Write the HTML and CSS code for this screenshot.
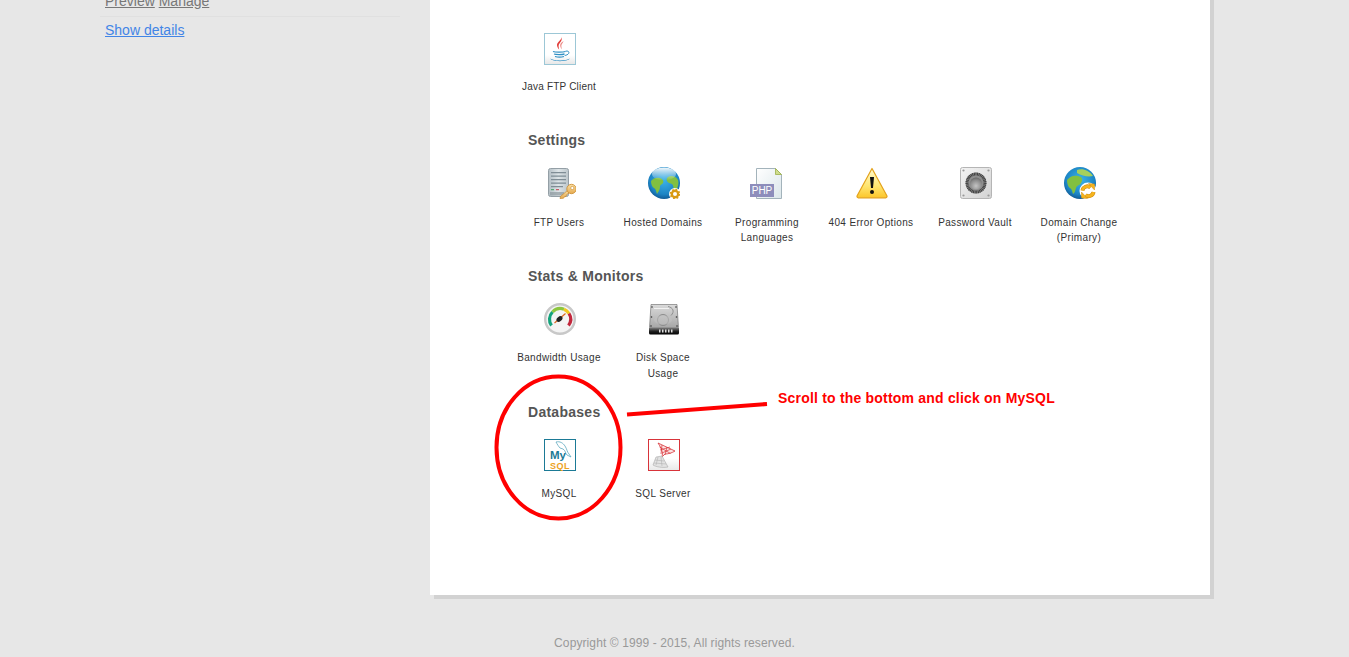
FILE: index.html
```html
<!DOCTYPE html>
<html lang="en">
<head>
<meta charset="utf-8">
<title>Control Panel</title>
<link rel="stylesheet" href="styles.css">
</head>
<body>
<div class="page">
  <aside class="sidebar">
    <div class="site-links"><a class="muted" href="#">Preview</a> <a class="muted" href="#">Manage</a></div>
    <div class="details"><a class="blue" href="#">Show details</a></div>
  </aside>
  <main class="panel">
    <section class="group first">
      <div class="tiles">
        <div class="tile">
          <svg class="icon" viewBox="0 0 32 32"><defs><linearGradient id="gj" x1="0" y1="0" x2="0" y2="1"><stop offset="0.7" stop-color="#fff"/><stop offset="1" stop-color="#e6e6e6"/></linearGradient></defs><rect x=".5" y=".5" width="31" height="31" fill="url(#gj)" stroke="#9cc7d6"/><path d="M17.500 3.500c1 3-4 5-4.500 8-.3 1.800 1 3.800 2.200 5.300-.2-2-1-3.200-.4-5 .8-2.300 4-4 2.700-8.300z" fill="#e2403c"/><path d="M19.500 8c-2.500 1.500-3.500 3-3.300 4.700.1 1.200 1 2.300 1 3.800 1-1.700-.2-2.900.2-4.200.4-1.300 1.700-2.500 2.100-4.300z" fill="#ec8a86"/><path d="M9 18.500c2 .9 10 .9 12.500 0M10 21c2 .7 8 .7 10.500 0M11 23.500c2 .6 7 .6 9 0" fill="none" stroke="#2f8fc4" stroke-width="1.300"/><path d="M21.500 18.200c2.500-.7 4 .6 3.200 2.200-.7 1.200-2.300 1.800-4 2.100" fill="none" stroke="#2f8fc4" stroke-width="1"/><path d="M6 25.500c3.500 2.500 16.500 2.500 20 0-2 3.500-18 3.500-20 0z" fill="#2f8fc4"/></svg>
          <div class="label">Java FTP Client</div>
        </div>
      </div>
    </section>

    <section class="group settings">
      <h2 class="heading">Settings</h2>
      <div class="tiles">
        <div class="tile">
          <svg class="icon" viewBox="0 0 32 32"><defs><linearGradient id="gs" x1="0" y1="0" x2="1" y2="0"><stop offset="0" stop-color="#b4bfc5"/><stop offset=".5" stop-color="#dde4e7"/><stop offset="1" stop-color="#bcc6cb"/></linearGradient><linearGradient id="gk" x1="0" y1="0" x2="0" y2="1"><stop offset="0" stop-color="#fbe0a4"/><stop offset="1" stop-color="#e6aa50"/></linearGradient></defs><rect x="4.500" y="1.500" width="20" height="28" rx="2" fill="url(#gs)" stroke="#949fa6"/><path d="M7 5h15v1.200H7zM7 8.500h15v1.200H7zM7 12h15v1.200H7zM7 15.500h15v1.200H7zM7 19h12v1.200H7z" fill="#7f8d95"/><path d="M7 22.200h3v1H7z" fill="#3ba15a"/><path d="M12 22.200h3v1h-3z" fill="#c43a4a"/><path d="M6 25h14v3.500H6z" fill="#8d989e" opacity=".7"/><path d="M24 23l-7.500 6.500-.5 2 3.500-.3 1-1.500 1.500-.2.500-1.700 4-3z" fill="url(#gk)" stroke="#c98a2c" stroke-width=".7"/><circle cx="27.500" cy="22" r="4.700" fill="url(#gk)" stroke="#c98a2c" stroke-width=".8"/><circle cx="28.300" cy="21" r="1.600" fill="#fff" stroke="#c98a2c" stroke-width=".6"/></svg>
          <div class="label">FTP Users</div>
        </div>
        <div class="tile">
          <svg class="icon" viewBox="0 0 32 32"><defs><radialGradient id="gg" cx=".5" cy=".4" r=".65"><stop offset="0" stop-color="#3cb4ea"/><stop offset=".7" stop-color="#1c84c4"/><stop offset="1" stop-color="#0d4d86"/></radialGradient><linearGradient id="gw" x1="0" y1="0" x2="0" y2="1"><stop offset="0" stop-color="#fff" stop-opacity=".95"/><stop offset="1" stop-color="#fff" stop-opacity="0"/></linearGradient></defs><circle cx="16" cy="16" r="16" fill="url(#gg)"/><path d="M3 14c2-3 6-4 9-3 3 1 4 3 3 5s-3 1-3 4-2 5-3 7c-1-3-1-5-3-6s-3-4-3-7z" fill="#82c040"/><path d="M20 10c3-2 8-1 10 3 1 3 0 6-1 9l-3 1c-1-2 0-4-2-6-2-1-4-1-5-3s0-3 1-4z" fill="#82c040"/><ellipse cx="16" cy="7" rx="12" ry="6.500" fill="url(#gw)"/><circle cx="27" cy="27" r="6" fill="#fff"/><circle cx="27" cy="27" r="3.200" fill="none" stroke="#d99a12" stroke-width="2.400"/><circle cx="27" cy="27" r="4.600" fill="none" stroke="#d99a12" stroke-width="1.400" stroke-dasharray="1.800 1.800"/></svg>
          <div class="label">Hosted Domains</div>
        </div>
        <div class="tile">
          <svg class="icon icon-over" viewBox="0 0 32 32"><defs><linearGradient id="gp" x1="0" y1="0" x2="1" y2="1"><stop offset="0" stop-color="#fff"/><stop offset="1" stop-color="#dbe6ea"/></linearGradient></defs><path d="M4.500 1.500h19l6 6v24h-25z" fill="url(#gp)" stroke="#a3b3bb"/><path d="M23.500 1.500v6h6z" fill="#cfdc8c" stroke="#9cb04a" stroke-width=".8"/><rect x="-2" y="17" width="24" height="13" fill="#8d8dbb"/><text class="php" x="10" y="27">PHP</text></svg>
          <div class="label">Programming Languages</div>
        </div>
        <div class="tile">
          <svg class="icon" viewBox="0 0 32 32"><defs><linearGradient id="gt" x1="0" y1="0" x2="0" y2="1"><stop offset="0" stop-color="#fffbd0"/><stop offset=".6" stop-color="#ffe570"/><stop offset="1" stop-color="#fcc62a"/></linearGradient></defs><path d="M16 1.500L31 29a1.500 1.500 0 0 1-1.300 1.800H2.300A1.500 1.500 0 0 1 1 29z" fill="url(#gt)" stroke="#e4a21c" stroke-width="1.200" stroke-linejoin="round"/><path d="M14 10h4l-1 11h-2z" fill="#111"/><circle cx="16" cy="25" r="2" fill="#111"/></svg>
          <div class="label">404 Error Options</div>
        </div>
        <div class="tile">
          <svg class="icon" viewBox="0 0 32 32"><defs><linearGradient id="gv" x1="0" y1="0" x2="1" y2="1"><stop offset="0" stop-color="#f4f4f4"/><stop offset="1" stop-color="#d2d2d2"/></linearGradient><radialGradient id="gd" cx=".5" cy=".7" r=".7"><stop offset="0" stop-color="#c4c4c4"/><stop offset=".7" stop-color="#8a8a8a"/><stop offset="1" stop-color="#666"/></radialGradient></defs><rect x=".5" y=".5" width="31" height="31" rx="2" fill="url(#gv)" stroke="#b5b5b5"/><circle cx="3.500" cy="3.500" r="1.100" fill="#999"/><circle cx="28.500" cy="3.500" r="1.100" fill="#999"/><circle cx="3.500" cy="28.500" r="1.100" fill="#999"/><circle cx="28.500" cy="28.500" r="1.100" fill="#999"/><circle cx="16" cy="16" r="10.500" fill="#8e8e8e"/><circle cx="16" cy="16" r="9" fill="none" stroke="#3f3f3f" stroke-width="3" stroke-dasharray="1 .6"/><circle cx="16" cy="16.500" r="6" fill="url(#gd)"/></svg>
          <div class="label">Password Vault</div>
        </div>
        <div class="tile">
          <svg class="icon" viewBox="0 0 32 32"><defs><radialGradient id="gg2" cx=".5" cy=".4" r=".65"><stop offset="0" stop-color="#3cb4ea"/><stop offset=".7" stop-color="#1c84c4"/><stop offset="1" stop-color="#0d4d86"/></radialGradient></defs><circle cx="16" cy="16" r="16" fill="url(#gg2)"/><path d="M3 13c3-4 7-5 11-4 5 1 5 4 3 7s-4 2-5 5-1 5-3 6c-1-3-1-5-3-6s-3-5-3-8z" fill="#82c040"/><path d="M13 3c5-2 12 0 16 6-5 1-11 0-16-3z" fill="#a6d05c"/><circle cx="24" cy="24" r="8.500" fill="#fff"/><path d="M18.500 23.500c.5-3.500 5-5.500 8-3" fill="none" stroke="#cc8a10" stroke-width="4"/><path d="M18.500 23.500c.5-3.500 5-5.500 8-3" fill="none" stroke="#f6b41e" stroke-width="2.800"/><path d="M24.500 16.500l6 .5v6z" fill="#f6b41e" stroke="#cc8a10" stroke-width=".5"/><path d="M29.500 25c-.5 3.500-5 5.500-8 3" fill="none" stroke="#cc8a10" stroke-width="4"/><path d="M29.500 25c-.5 3.500-5 5.500-8 3" fill="none" stroke="#f6b41e" stroke-width="2.800"/><path d="M23.500 31.500l-6-.5v-6z" fill="#f6b41e" stroke="#cc8a10" stroke-width=".5"/></svg>
          <div class="label">Domain Change (Primary)</div>
        </div>
      </div>
    </section>

    <section class="group">
      <h2 class="heading">Stats &amp; Monitors</h2>
      <div class="tiles">
        <div class="tile">
          <svg class="icon" viewBox="0 0 32 32"><circle cx="16" cy="16" r="14.800" fill="#f4f4f4" stroke="#c8c8c8" stroke-width="2.400"/><path d="M7.500 22.500A10.500 10.500 0 0 1 8.500 9" fill="none" stroke="#14a37c" stroke-width="3.200"/><path d="M8.500 9A10.500 10.500 0 0 1 20 6.300" fill="none" stroke="#8cc63f" stroke-width="3.200"/><path d="M20 6.300A10.500 10.500 0 0 1 25 10.500" fill="none" stroke="#f2c81e" stroke-width="3.200"/><path d="M25 10.500A10.500 10.500 0 0 1 24.500 22.500" fill="none" stroke="#c2273c" stroke-width="3.200"/><path d="M10.500 20l11-9.500" stroke="#d9661f" stroke-width="1.200"/><ellipse cx="15.500" cy="16" rx="3.400" ry="2.300" transform="rotate(-40 15.500 16)" fill="#222"/></svg>
          <div class="label">Bandwidth Usage</div>
        </div>
        <div class="tile">
          <svg class="icon" viewBox="0 0 32 32"><defs><linearGradient id="gh" x1="0" y1="0" x2="0" y2="1"><stop offset="0" stop-color="#dadada"/><stop offset="1" stop-color="#a8a8a8"/></linearGradient><linearGradient id="gb" x1="0" y1="0" x2="0" y2="1"><stop offset="0" stop-color="#777"/><stop offset=".5" stop-color="#222"/><stop offset="1" stop-color="#000"/></linearGradient></defs><path d="M3 1.500h26l1.500 23h-29z" fill="url(#gh)" stroke="#666" stroke-width=".6"/><path d="M1 25h30v5a1.500 1.500 0 0 1-1.500 1.500h-27A1.500 1.500 0 0 1 1 30z" fill="url(#gb)"/><path d="M6 5.500h15" stroke="#f2f2f2" stroke-width="1"/><circle cx="15" cy="17" r="5.500" fill="none" stroke="#8b8b8b" stroke-width="1"/><ellipse cx="15" cy="17" rx="9" ry="4.500" fill="#c4c4c4" opacity=".5"/><path d="M20 3.500c5 1 7 5 3 9" fill="none" stroke="#8f8f8f" stroke-width="1"/><path d="M14 26.500h1.500v3H14zM17 26.500h1.500v3H17zM20 26.500h1.500v3H20zM23 26.500h1.500v3H23zM11 26.500h1.500v3H11z" fill="#ddd"/><circle cx="4" cy="4" r=".8" fill="#333"/><circle cx="28" cy="4" r=".8" fill="#333"/><circle cx="3.500" cy="14" r=".8" fill="#333"/><circle cx="28.500" cy="14" r=".8" fill="#333"/><circle cx="3" cy="23" r=".8" fill="#333"/><circle cx="29" cy="23" r=".8" fill="#333"/></svg>
          <div class="label">Disk Space Usage</div>
        </div>
      </div>
    </section>

    <section class="group">
      <h2 class="heading">Databases</h2>
      <div class="tiles">
        <div class="tile">
          <svg class="icon" viewBox="0 0 32 32"><rect x=".5" y=".5" width="31" height="31" fill="#fff" stroke="#1b7a96"/><path d="M12 3c4-1 7 1 9 4s2 6 4 8l2 3-4-2c-2-2-1-4-4-6l-3-1c-1-1-3-4-4-6z" fill="#fff" stroke="#5ea9bf" stroke-width=".8"/><text class="my" x="6" y="19.500">My</text><text class="sqltxt" x="6" y="30">SQL</text></svg>
          <div class="label">MySQL</div>
        </div>
        <div class="tile">
          <svg class="icon" viewBox="0 0 32 32"><defs><linearGradient id="gq" x1="0" y1="0" x2="0" y2="1"><stop offset=".6" stop-color="#fff"/><stop offset="1" stop-color="#e8e8e8"/></linearGradient></defs><rect x=".5" y=".5" width="31" height="31" fill="url(#gq)" stroke="#d8343a"/><path d="M10 4l17 8c-3 2-7 3-10 3l-3 3c1-4 0-8-4-14z" fill="#fbe4e4" stroke="#d8343a" stroke-width=".8"/><path d="M11.500 8l11 6.500M14 6l-1 9M19 8l-2 8M23 10l-9 4M12 11l10-3" stroke="#d8343a" stroke-width=".7" fill="none"/><path d="M8 18l6-1 6 11c-5 1-12 0-15-2z" fill="#e2e2e2" stroke="#aaa" stroke-width=".6"/><path d="M7 21l9 1M6 24l12 1M10 18l-2 8M13 18l1 9" stroke="#aaa" stroke-width=".5" fill="none"/></svg>
          <div class="label">SQL Server</div>
        </div>
      </div>
    </section>
  </main>
</div>
<footer class="footer">Copyright © 1999 - 2015, All rights reserved.</footer>

<div class="annotation">
  <svg class="marks" viewBox="0 0 1349 657" width="1349" height="657"><ellipse cx="558.500" cy="447.500" rx="62" ry="71" fill="none" stroke="#f00" stroke-width="4"/><path d="M627 414.500L767 404" stroke="#f00" stroke-width="4" fill="none"/></svg>
  <p class="note">Scroll to the bottom and click on MySQL</p>
</div>
</body>
</html>
```
FILE: styles.css
```css
* { box-sizing: border-box; }
html, body { margin: 0; padding: 0; height: 657px; overflow: hidden; }
body {
  position: relative;
  background: #e7e7e7;
  font-family: "Liberation Sans", Arial, sans-serif;
}
.page {
  display: flex;
  align-items: flex-start;
  margin-top: -40px;
}
.sidebar {
  width: 430px;
  padding: 33px 30px 0 100px;
  font-size: 14px;
  line-height: 16px;
}
.site-links {
  padding: 0 0 7px 5px;
  border-bottom: 1px solid #e0e0e0;
}
.details { padding: 5px 0 0 5px; }
.muted { color: #777; }
.blue { color: #4285e6; }
.panel {
  width: 780px;
  height: 635px;
  padding: 73px 0 0 77px;
  background: #fff;
  box-shadow: 4px 4px 0 #d2d2d2;
}
.first { height: 97px; }
.heading {
  margin: 0 0 17px 21px;
  font-size: 14px;
  line-height: 20px;
  letter-spacing: .27px;
  font-weight: bold;
  color: #555;
}
.tiles {
  display: flex;
  height: 99px;
}
.first .tiles { height: 97px; }
.tile {
  width: 104px;
  display: flex;
  flex-direction: column;
  align-items: center;
}
.icon {
  display: block;
  width: 32px;
  height: 32px;
  margin-left: 1px;
  flex: none;
}
.icon-over { overflow: visible; }
.label {
  width: 87px;
  margin-top: 15px;
  font-size: 10px;
  line-height: 16px;
  letter-spacing: .35px;
  text-align: center;
  color: #333;
}
.first .label { margin-top: 14px; line-height: 15.5px; letter-spacing: .2px; }
.settings .label { margin-top: 16px; line-height: 15px; }
.php { font: 10px "Liberation Sans", Arial, sans-serif; fill: #fff; text-anchor: middle; }
.my { font: bold 11.500px "Liberation Sans", Arial, sans-serif; fill: #1b7a96; }
.sqltxt { font: bold 9px "Liberation Sans", Arial, sans-serif; fill: #eda21d; letter-spacing: .5px; }
.footer {
  margin-top: 41px;
  font-size: 12px;
  line-height: 14px;
  letter-spacing: .1px;
  text-align: center;
  color: #999;
}
.annotation { position: absolute; top: 0; left: 0; width: 1349px; height: 657px; pointer-events: none; }
.marks { display: block; }
.note {
  position: absolute;
  left: 778px;
  top: 390px;
  margin: 0;
  font-size: 14px;
  line-height: 17px;
  letter-spacing: .2px;
  font-weight: bold;
  color: #f00;
  white-space: nowrap;
}
```
